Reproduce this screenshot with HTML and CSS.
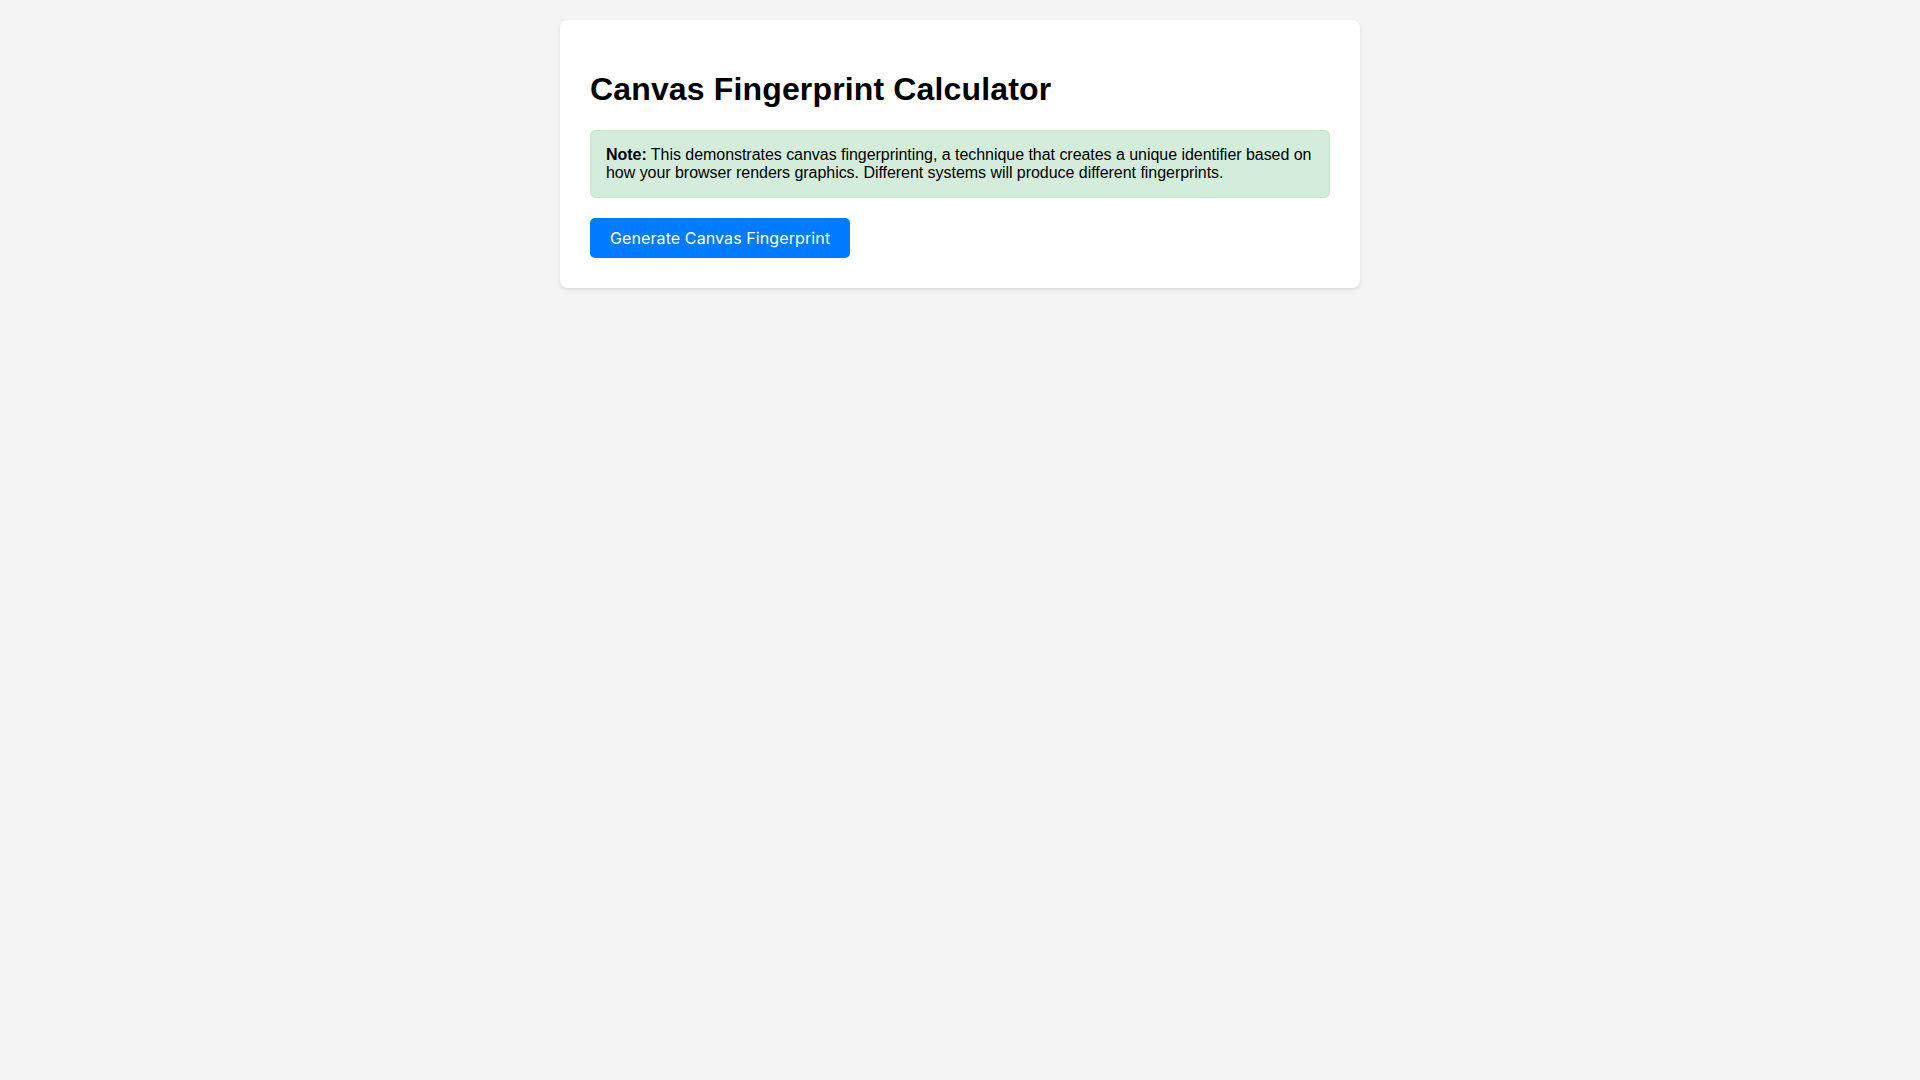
FILE: index.html
```html
<!DOCTYPE html>
<html lang="en">
<head>
  <meta charset="UTF-8" />
  <meta name="viewport" content="width=device-width, initial-scale=1.0" />
  <title>Canvas Fingerprint Calculator</title>
  <link rel="stylesheet" href="styles.css">
</head>
<body>
  <div class="container">
    <h1>Canvas Fingerprint Calculator</h1>
    <div class="note">
      <strong>Note:</strong> This demonstrates canvas fingerprinting, a technique that creates a unique identifier based on how your browser renders graphics. Different systems will produce different fingerprints.
    </div>
    <button id="generateBtn">Generate Canvas Fingerprint</button>
  </div>
</body>
</html>
```

FILE: styles.css
```css
body {
  font-family: 'Liberation Sans', Arial, sans-serif;
  background-color: #f4f4f4;
  color: #000;
  margin: 0;
  padding: 20px;
}
.container {
  max-width: 740px;
  margin: 0 auto;
  background: #fff;
  padding: 30px;
  border-radius: 8px;
  box-shadow: 0 2px 4px rgba(0, 0, 0, 0.1);
}
h1 {
  font-size: 32px;
  letter-spacing: 0.15px;
  margin: 21px 0 22px;
}
.note {
  background-color: #d4edda;
  border: 1px solid #c3e6cb;
  border-radius: 5px;
  padding: 15px;
  margin-bottom: 20px;
  font-size: 16px;
  letter-spacing: -0.04px;
}
button {
  font-family: Inter, 'Noto Sans', sans-serif;
  font-size: 16px;
  letter-spacing: 0.1px;
  background-color: #007bff;
  color: #fff;
  border: none;
  border-radius: 5px;
  padding: 10px 20px;
  cursor: pointer;
}
button:hover {
  background-color: #0056b3;
}
```
